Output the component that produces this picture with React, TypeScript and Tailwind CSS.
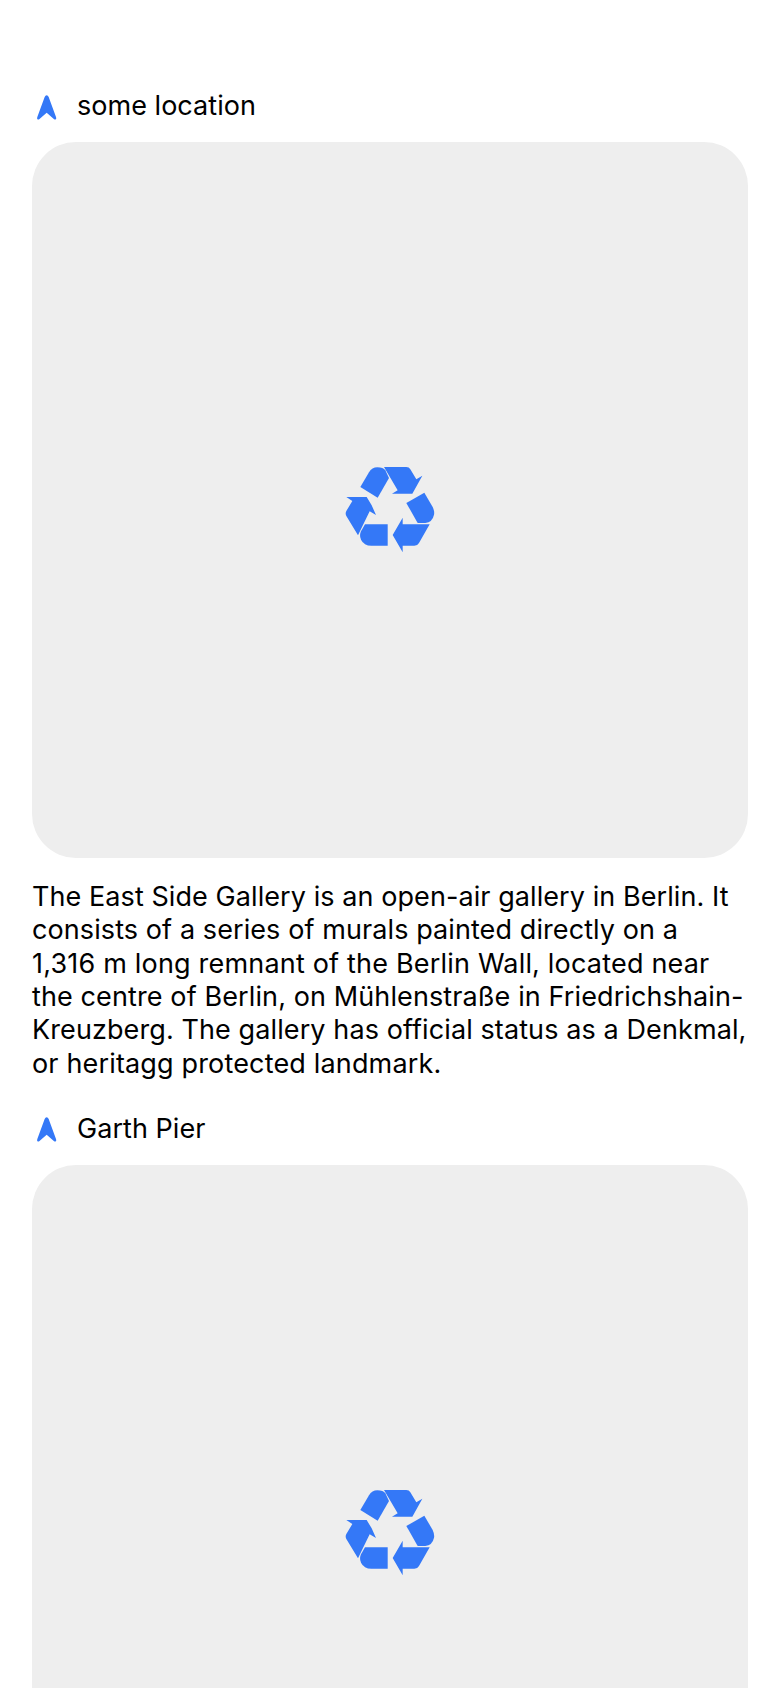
type Line = { text: string; className: string };

type Post = { title: string; titleClass: string; lines: Line[] };

const posts: Post[] = [
  {
    title: 'some location',
    titleClass: 'tracking-[0.03px]',
    lines: [
      { text: 'The East Side Gallery is an open-air gallery in Berlin. It', className: 'tracking-[0.075px]' },
      { text: 'consists of a series of murals painted directly on a', className: 'tracking-[0.09px]' },
      { text: '1,316 m long remnant of the Berlin Wall, located near', className: 'tracking-[0.19px]' },
      { text: 'the centre of Berlin, on Mühlenstraße in Friedrichshain-', className: 'tracking-[0.11px]' },
      { text: 'Kreuzberg. The gallery has official status as a Denkmal,', className: 'tracking-[0.1px]' },
      { text: 'or heritagg protected landmark.', className: 'tracking-[0.16px]' },
    ],
  },
  { title: 'Garth Pier', titleClass: 'tracking-[0.04px]', lines: [] },
];

function LocationArrow() {
  return (
    <svg viewBox="0 0 60 75" className="mt-0.5 h-[25px] w-[20px] shrink-0 fill-[#3478f7]" aria-hidden="true">
      <path d="M29 1 Q33 1 35 6 L57 66 Q58.500 71 56.500 73 Q54 75 50.500 72 L29 53 L7.500 72 Q4 75 1.500 73 Q-0.500 71 1 66 L23 6 Q25 1 29 1 Z" />
    </svg>
  );
}

function RecycleIcon() {
  return (
    <svg viewBox="0 0 360 360" className="h-[120px] w-[120px] fill-[#3478f7]" aria-hidden="true">
      <path d="M91 111 L117 67 Q126 52 142 52 Q160 52 166 61 L177 84 L143 143 Z" />
      <path d="M162 51 H229 Q237 51 241 58 L259 88 L277 77 L247 131 H186 L203 121 Z" />
      <path d="M229 159 L283 128 L308 171 Q314 184 312 194 Q307 217 286 219 H263 Z" />
      <path d="M218 203 V223 H299 L267 279 Q263 287 253 287 H218 V307 L188 255 Z" />
      <path d="M105 223 H173 V287 H124 Q102 287 93 269 Q87 256 93 244 Z" />
      <path d="M49 141 H110 L125 166 L138 195 L119 184 L84 256 L49 198 Q45 191 49 183 L67 153 Z" />
    </svg>
  );
}

function PostItem({ post }: { post: Post }) {
  return (
    <article>
      <header className="flex h-[72px] items-center pl-[5px]">
        <LocationArrow />
        <h2 className={`ml-5 whitespace-nowrap text-[27px] leading-[33.33px] ${post.titleClass}`}>{post.title}</h2>
      </header>
      <div className="flex h-[716px] w-[716px] items-center justify-center rounded-[44px] bg-[#eeeeee] pt-5">
        <RecycleIcon />
      </div>
      {post.lines.length > 0 && (
        <p className="mt-[22px] pb-[13px] text-[27px] leading-[33.33px]">
          {post.lines.map((line) => (
            <span key={line.text} className={`block whitespace-nowrap ${line.className}`}>
              {line.text}
            </span>
          ))}
        </p>
      )}
    </article>
  );
}

export default function App() {
  return (
    <main className="h-[1688px] overflow-hidden bg-white px-8 pt-[70px] font-['Inter',sans-serif] text-black">
      {posts.map((post) => (
        <PostItem key={post.title} post={post} />
      ))}
    </main>
  );
}
